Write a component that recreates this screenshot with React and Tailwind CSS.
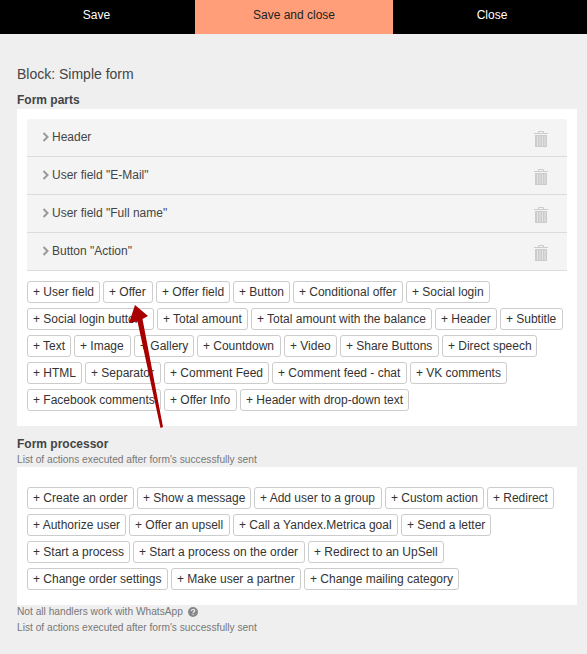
const parts = ['Header', 'User field "E-Mail"', 'User field "Full name"', 'Button "Action"'];
const fields = [
  ['User field','w-[72.4px]'],['Offer','w-[49.4px]'],['Offer field','w-[73.4px]'],['Button','w-[56.4px]'],['Conditional offer','w-[109.4px]'],['Social login','w-[83.4px]'],
  ['Social login button','w-[126.4px]'],['Total amount','w-[90.4px]'],['Total amount with the balance','w-[180.4px]'],['Header','w-[61.4px]'],['Subtitle','w-[62.4px]'],
  ['Text','w-[43.4px]'],['Image','w-[56.4px]'],['Gallery','w-[59.4px]'],['Countdown','w-[83.4px]'],['Video','w-[52.4px]'],['Share Buttons','w-[98.4px]'],['Direct speech','w-[94.4px]'],
  ['HTML','w-[54.4px]'],['Separator','w-[75.4px]'],['Comment Feed','w-[104.4px]'],['Comment feed - chat','w-[134.4px]'],['VK comments','w-[96.4px]'],
  ['Facebook comments','w-[133.4px]'],['Offer Info','w-[72.4px]'],['Header with drop-down text','w-[168.4px]'],
];
const actions = [
  ['Create an order','w-[106.4px]'],['Show a message','w-[113.4px]'],['Add user to a group','w-[127.4px]'],['Custom action','w-[98.4px]'],['Redirect','w-[66.4px]'],
  ['Authorize user','w-[98.4px]'],['Offer an upsell','w-[100.4px]'],['Call a Yandex.Metrica goal','w-[164.4px]'],['Send a letter','w-[89.4px]'],
  ['Start a process','w-[102.4px]'],['Start a process on the order','w-[171.4px]'],['Redirect to an UpSell','w-[135.4px]'],
  ['Change order settings','w-[140.4px]'],['Make user a partner','w-[129.4px]'],['Change mailing category','w-[154.4px]'],
];

function Trash() {
  return (
    <svg width="14" height="16" viewBox="0 0 14 16" className="block">
      <path d="M0 2.5h14" stroke="#ccc" strokeWidth="1" />
      <path d="M4.5 2V0.5h5V2" stroke="#ccc" strokeWidth="1" fill="none" />
      <rect x="1" y="4" width="12" height="12" fill="#ccc" />
      <path d="M3.5 5v10M6 5v10M8.5 5v10M11 5v10" stroke="#e4e4e4" strokeWidth="1" />
    </svg>
  );
}

function Chips({ items }) {
  return (
    <div className="flex flex-wrap gap-x-[3.6px] gap-y-[5px] pl-[0.3px]">
      {items.map(([t, w]) => (
        <button key={t} className={w + " h-[22px] pl-[4.7px] rounded-[3px] border border-[#ccc] bg-white text-[12px] leading-[20px] text-[#333] text-left whitespace-nowrap"}>
          + {t}
        </button>
      ))}
    </div>
  );
}

export default function App() {
  return (
    <div className="relative min-h-[654px] bg-[#efefef] text-[#333] font-['Liberation_Sans',Arial,sans-serif] overflow-hidden">
      <div className="flex h-[34px] text-[12px] leading-[30px] text-center">
        <div className="w-[195px] bg-black text-white pr-[2px]">Save</div>
        <div className="w-[198px] bg-[#ff9e78] text-[#222]">Save and close</div>
        <div className="flex-1 bg-black text-white pl-[4px]">Close</div>
      </div>
      <div className="px-[17px] pr-[10px]">
        <div className="mt-[32px] text-[14px] leading-[16px] text-[#444]">Block: Simple form</div>
        <div className="mt-[11px] text-[12px] leading-[14px] font-bold text-[#444]">Form parts</div>
        <div className="mt-[2px] bg-white p-[10px] pb-[15px]">
          <div className="rounded-t-[3px] overflow-hidden">
            {parts.map((p) => (
              <div key={p} className="flex items-center h-[38px] bg-[#f4f4f4] border-b border-[#dcdcdc] pb-[2px] pl-[15px] pr-[19px]">
                <svg width="8" height="10" viewBox="0 0 8 10" className="mr-[2px]"><path d="M1.5 1l4 4-4 4" fill="none" stroke="#999" strokeWidth="2" /></svg>
                <span className="text-[12px] text-[#444]">{p}</span>
                <span className="ml-auto mt-[5px]"><Trash /></span>
              </div>
            ))}
          </div>
          <div className="mt-[10px]"><Chips items={fields} /></div>
        </div>
        <div className="mt-[11px] text-[12px] leading-[14px] font-bold text-[#444]">Form processor</div>
        <div className="mt-[3px] text-[10.2px] leading-[12px] text-[#777]">List of actions executed after form's successfully sent</div>
        <div className="mt-[1px] bg-white p-[10px] pt-[20px] pb-[15px] h-[138px]"><Chips items={actions} /></div>
        <div className="mt-[1px] flex items-center gap-[5px] text-[10.2px] leading-[12px] text-[#777]">
          Not all handlers work with WhatsApp
          <svg width="10" height="10" viewBox="0 0 10 10"><circle cx="5" cy="5" r="5" fill="#888" /><path d="M3.4 4c0-2 3.3-2 3.3-.2 0 1.2-1.7 1.1-1.7 2.2" fill="none" stroke="#efefef" strokeWidth="1.2" /><rect x="4.4" y="6.8" width="1.2" height="1.2" fill="#efefef" /></svg>
        </div>
        <div className="mt-[4px] text-[10.2px] leading-[12px] text-[#777]">List of actions executed after form's successfully sent</div>
      </div>
      <svg className="absolute left-0 top-0 pointer-events-none" width="587" height="654">
        <path d="M135 305L148 316L142.5 319L163 427L160.5 428L137.5 321.5L129 323Z" fill="#a80000" />
      </svg>
    </div>
  );
}
